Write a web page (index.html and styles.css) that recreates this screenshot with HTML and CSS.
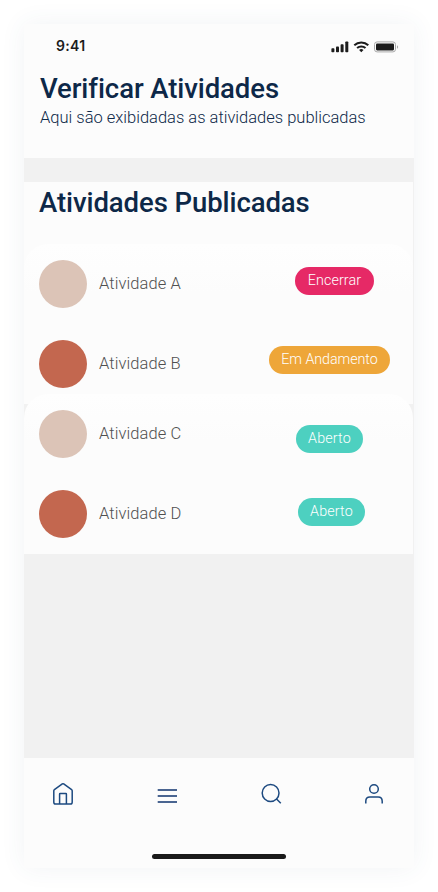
FILE: index.html
```html
<!DOCTYPE html>
<html lang="pt-BR">
<head>
<meta charset="utf-8">
<meta name="viewport" content="width=device-width, initial-scale=1">
<title>Verificar Atividades</title>
<link rel="stylesheet" href="styles.css">
</head>
<body>
<div class="phone">
  <header class="header">
    <div class="status">
      <span class="time">9:41</span>
      <svg class="status-icons" width="68" height="14" viewBox="0 0 68 14" fill="#1c1c1c">
        <rect x="0.4" y="8.2" width="3" height="4" rx="0.8"/>
        <rect x="5" y="6.5" width="3" height="5.7" rx="0.8"/>
        <rect x="9.6" y="4.2" width="3" height="8" rx="0.8"/>
        <rect x="14.3" y="1.5" width="3" height="10.7" rx="0.8"/>
        <g fill="none" stroke="#1c1c1c" stroke-width="2">
          <path d="M23.3 5.2a10.1 10.1 0 0 1 14 0"/>
          <path d="M26.1 8.1a6.1 6.1 0 0 1 8.4 0"/>
        </g>
        <path d="M28.1 10.1a3.3 3.3 0 0 1 4.4 0L30.3 12.3z"/>
        <rect x="43.5" y="1.9" width="21" height="10" rx="2.6" fill="none" stroke="#aaa"/>
        <rect x="45" y="3.4" width="18" height="7" rx="1.1"/>
        <path d="M66 5.2v3.6a2 2 0 0 0 0-3.6z" fill="#aaa"/>
      </svg>
    </div>
    <h1 class="title">Verificar Atividades</h1>
    <p class="subtitle">Aqui são exibidadas as atividades publicadas</p>
  </header>
  <main class="content">
    <section class="published">
      <h2 class="section-title">Atividades Publicadas</h2>
      <ul class="card">
        <li class="row"><span class="avatar light"></span><span class="name">Atividade A</span><span class="badge close">Encerrar</span></li>
        <li class="row"><span class="avatar dark"></span><span class="name">Atividade B</span><span class="badge progress">Em Andamento</span></li>
      </ul>
    </section>
    <ul class="card overlap">
      <li class="row"><span class="avatar light"></span><span class="name">Atividade C</span><span class="badge open">Aberto</span></li>
      <li class="row"><span class="avatar dark"></span><span class="name">Atividade D</span><span class="badge open last">Aberto</span></li>
    </ul>
  </main>
  <footer class="footer">
    <nav class="nav">
      <svg width="24" height="24" viewBox="0 0 24 24"><path d="M2.8 8.8Q2.8 8.1 3.4 7.7L11.3 1.9Q12 1.4 12.7 1.9L20.6 7.7Q21.2 8.1 21.2 8.8V20.2Q21.2 22 19.4 22H4.6Q2.8 22 2.8 20.2Z"/><path d="M8.6 22V12.1Q8.6 11.6 9.1 11.6H14.9Q15.4 11.6 15.4 12.1V22"/></svg>
      <svg class="menu" width="24" height="24" viewBox="0 0 24 24"><path d="M2.7 6H22M2.7 12H22M2.7 18H22"/></svg>
      <svg width="24" height="24" viewBox="0 0 24 24"><circle cx="12.6" cy="11" r="8.4"/><path d="M18.3 16.8L22.8 21.3"/></svg>
      <svg width="24" height="24" viewBox="0 0 24 24"><circle cx="12" cy="7" r="4.3"/><path d="M3.8 21.5V19.2Q3.8 15.1 7.9 15.1H16.1Q20.2 15.1 20.2 19.2V21.5"/></svg>
    </nav>
    <div class="home-bar"></div>
  </footer>
</div>
</body>
</html>
```

FILE: styles.css
```css
* { box-sizing: border-box; margin: 0; padding: 0; }
body { background: #fff; font-family: Roboto, "Liberation Sans", sans-serif; }
.phone {
  display: flex;
  flex-direction: column;
  width: 390px;
  height: 844px;
  margin: 24px;
  background: #f1f1f1;
  box-shadow: 0 0 24px rgba(50, 80, 120, 0.07);
}
.header { height: 134px; background: #fcfcfc; }
.status {
  display: flex;
  justify-content: space-between;
  height: 48px;
  padding: 13px 15px 0 32px;
}
.time { font-family: Inter, sans-serif; font-size: 14px; font-weight: 600; line-height: 18px; letter-spacing: 0.3px; color: #1c1c1c; }
.status-icons { margin-top: 3px; }
.title, .section-title {
  font-size: 27.5px;
  font-weight: 500;
  line-height: 34px;
  letter-spacing: -0.08px;
  color: #0d2848;
  white-space: nowrap;
}
.title { padding-left: 16px; }
.subtitle {
  padding: 1px 0 0 16px;
  font-size: 16.5px;
  font-weight: 300;
  line-height: 22px;
  color: #0d2848;
  white-space: nowrap;
}
.content { width: 389px; height: 576px; margin-top: 24px; }
.published { height: 222px; background: #fcfcfc; }
.section-title { height: 62px; padding: 4px 0 0 15px; }
.card {
  height: 160px;
  padding: 16px 15px;
  border-radius: 24px 24px 0 0;
  background: linear-gradient(#fefefe, #fcfcfc 30%);
  list-style: none;
}
.overlap { position: relative; margin-top: -10px; }
.row { display: flex; height: 80px; }
.avatar { width: 48px; height: 48px; border-radius: 50%; }
.light { background: #dcc4b7; }
.dark { background: #c3674f; }
.name { margin-left: 12px; font-size: 16.5px; font-weight: 300; line-height: 48px; letter-spacing: 0.1px; color: #505050; }
.badge {
  height: 28px;
  margin-left: auto;
  border-radius: 14px;
  color: #fff;
  font-size: 14.3px;
  font-weight: 300;
  line-height: 27px;
  text-align: center;
}
.close { width: 79px; margin-top: 7px; margin-right: 24px; letter-spacing: 0.1px; background: #e62966; }
.progress { width: 121px; margin-top: 6px; margin-right: 8px; letter-spacing: -0.05px; background: #eea639; }
.open { width: 67px; margin-top: 15px; margin-right: 35px; letter-spacing: 0.15px; background: #4dd0c0; }
.last { margin-top: 8px; margin-right: 33px; }
.footer { height: 110px; background: #fcfcfc; }
.nav { display: flex; justify-content: space-between; height: 96px; padding: 24px 28px 0 27px; }
.nav svg { fill: none; stroke: #1d4a80; stroke-width: 1.5; }
.nav .menu { margin-top: 2px; stroke: #4a6591; stroke-width: 2; }
.home-bar { width: 134px; height: 5px; margin-left: 128px; border-radius: 3px; background: #1a1a1a; }
```
